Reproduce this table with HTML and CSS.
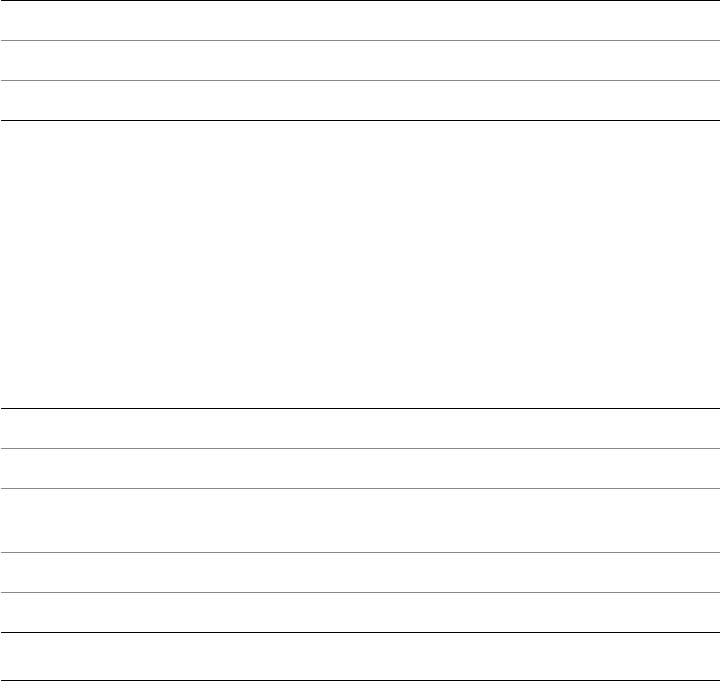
FILE: index.html
```html
<!DOCTYPE html>
<html lang="en">
<head>
<meta charset="utf-8">
<title>Table</title>
<link rel="stylesheet" href="styles.css">
</head>
<body>
<div class="sheet">
  <div class="group group-head">
    <div class="row"></div>
    <div class="row"></div>
    <div class="row row-end"></div>
  </div>
  <div class="gap"></div>
  <div class="group">
    <div class="row"></div>
    <div class="row"></div>
    <div class="row row-tall"></div>
    <div class="row"></div>
    <div class="row row-end"></div>
    <div class="row row-foot row-end"></div>
  </div>
</div>
</body>
</html>
```
FILE: styles.css
```css
html, body {
  margin: 0;
  padding: 0;
  background: #ffffff;
  font-family: "Liberation Sans", Arial, sans-serif;
}
.sheet {
  width: 719px;
  margin-left: 1px;
  display: flex;
  flex-direction: column;
}
.group-head {
  border-top: 1px solid #000000;
}
.row {
  height: 39px;
  border-bottom: 1px solid #888888;
}
.row-tall {
  height: 63px;
}
.row-end {
  border-bottom-color: #000000;
}
.row-foot {
  height: 47px;
}
.gap {
  height: 287px;
  border-bottom: 1px solid #000000;
}
```
